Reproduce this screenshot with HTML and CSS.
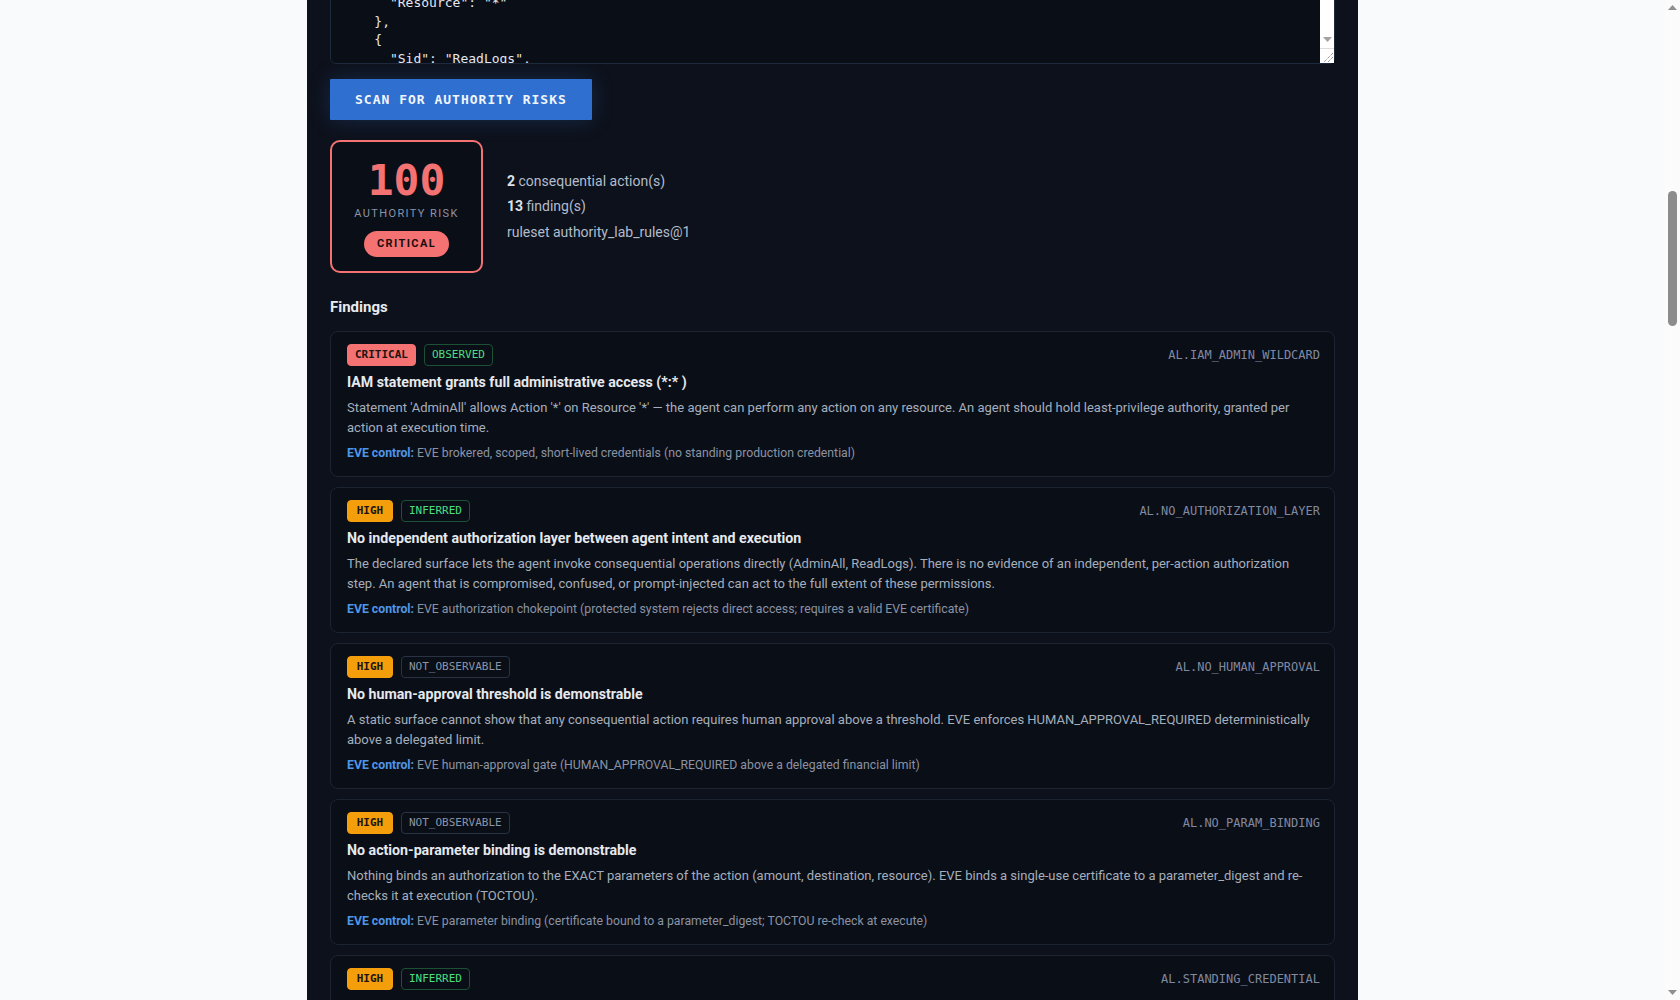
FILE: index.html
```html
<!DOCTYPE html>
<html lang="en">
<head>
<meta charset="utf-8">
<title>EVE Authority Lab</title>
<link rel="stylesheet" href="styles.css">
</head>
<body>
<main class="app">
  <header class="masthead">
    <div class="brand">EVE <span class="brand-sub">Authority Lab</span></div>
    <p class="tagline">Paste the authority surface an AI agent runs with and see what it could do on its own: which consequential actions it can reach, and which controls are missing between its intent and execution.</p>
  </header>

  <section class="intro">
    <h2 class="section-title">How the scan works</h2>
    <ol class="steps">
      <li class="step"><span class="step-num">1</span><div><h3>Parse the surface</h3><p>IAM policies, tool manifests and credential scopes are normalised into a list of actions the agent is able to invoke.</p></div></li>
      <li class="step"><span class="step-num">2</span><div><h3>Find consequential actions</h3><p>Actions that move money, change infrastructure, delete data or widen access are flagged as consequential.</p></div></li>
      <li class="step"><span class="step-num">3</span><div><h3>Apply the ruleset</h3><p>Each rule reports a severity and whether the problem is observed in the surface, inferred from it, or simply not observable statically.</p></div></li>
      <li class="step"><span class="step-num">4</span><div><h3>Map to EVE controls</h3><p>Every finding names the EVE control that closes it: brokered credentials, an authorization chokepoint, approval gates and parameter binding.</p></div></li>
    </ol>
    <p class="note">Nothing you paste leaves this page. The scan is deterministic: the same surface and ruleset always give the same score.</p>
  </section>

  <section class="lab">
    <h2 class="section-title">Scan an agent</h2>
    <p class="hint">Pick a sample or paste your own policy document.</p>
    <div class="samples">
      <button class="sample">AWS admin agent</button>
      <button class="sample">Payments agent</button>
      <button class="sample">Read-only analyst</button>
    </div>
    <label class="field-label" for="surface">Authority surface (IAM policy JSON)</label>
    <div class="surface-wrap">
      <textarea id="surface" class="surface" spellcheck="false">
{
  "Version": "2012-10-17",
  "Statement": [
    {
      "Sid": "AdminAll",
      "Effect": "Allow",
      "Action": "*",
      "Resource": "*"
    },
    {
      "Sid": "ReadLogs",
      "Effect": "Allow",
      "Action": [
        "logs:GetLogEvents",
        "logs:FilterLogEvents"
      ],
      "Resource": "*"
    }
  ]
}</textarea>
      <div class="ta-scrollbar" aria-hidden="true">
        <span class="ta-btn"><svg width="9" height="6" viewBox="0 0 9 6"><path d="M0 0h9L4.5 5z" fill="#a3a3a3"/></svg></span>
        <span class="ta-corner"><svg width="14" height="14" viewBox="0 0 14 14"><path d="M13 4 4 13M13 8 8 13" stroke="#6b6b6b" stroke-width="1" stroke-dasharray="1 1" fill="none"/></svg></span>
      </div>
    </div>
    <button class="scan-btn" id="scan">SCAN FOR AUTHORITY RISKS</button>

    <div class="summary">
      <div class="score-box">
        <div class="score">100</div>
        <div class="score-label">AUTHORITY RISK</div>
        <span class="band">CRITICAL</span>
      </div>
      <div class="stats">
        <div><b>2</b> consequential action(s)</div>
        <div><b>13</b> finding(s)</div>
        <div>ruleset authority_lab_rules@1</div>
      </div>
    </div>

    <h2 class="findings-title">Findings</h2>
    <div class="findings">
      <article class="finding">
        <div class="finding-head">
          <div class="badges"><span class="sev sev-critical">CRITICAL</span><span class="ev ev-yes">OBSERVED</span></div>
          <code class="rule">AL.IAM_ADMIN_WILDCARD</code>
        </div>
        <h3 class="finding-title">IAM statement grants full administrative access (*:* )</h3>
        <p class="desc">Statement 'AdminAll' allows Action '*' on Resource '*' — the agent can perform any action on any resource. An agent should hold least-privilege authority, granted per action at execution time.</p>
        <p class="control"><strong>EVE control:</strong> EVE brokered, scoped, short-lived credentials (no standing production credential)</p>
      </article>

      <article class="finding">
        <div class="finding-head">
          <div class="badges"><span class="sev sev-high">HIGH</span><span class="ev ev-yes">INFERRED</span></div>
          <code class="rule">AL.NO_AUTHORIZATION_LAYER</code>
        </div>
        <h3 class="finding-title">No independent authorization layer between agent intent and execution</h3>
        <p class="desc">The declared surface lets the agent invoke consequential operations directly (AdminAll, ReadLogs). There is no evidence of an independent, per-action authorization step. An agent that is compromised, confused, or prompt-injected can act to the full extent of these permissions.</p>
        <p class="control"><strong>EVE control:</strong> EVE authorization chokepoint (protected system rejects direct access; requires a valid EVE certificate)</p>
      </article>

      <article class="finding">
        <div class="finding-head">
          <div class="badges"><span class="sev sev-high">HIGH</span><span class="ev ev-no">NOT_OBSERVABLE</span></div>
          <code class="rule">AL.NO_HUMAN_APPROVAL</code>
        </div>
        <h3 class="finding-title">No human-approval threshold is demonstrable</h3>
        <p class="desc">A static surface cannot show that any consequential action requires human approval above a threshold. EVE enforces HUMAN_APPROVAL_REQUIRED deterministically above a delegated limit.</p>
        <p class="control"><strong>EVE control:</strong> EVE human-approval gate (HUMAN_APPROVAL_REQUIRED above a delegated financial limit)</p>
      </article>

      <article class="finding">
        <div class="finding-head">
          <div class="badges"><span class="sev sev-high">HIGH</span><span class="ev ev-no">NOT_OBSERVABLE</span></div>
          <code class="rule">AL.NO_PARAM_BINDING</code>
        </div>
        <h3 class="finding-title">No action-parameter binding is demonstrable</h3>
        <p class="desc">Nothing binds an authorization to the EXACT parameters of the action (amount, destination, resource). EVE binds a single-use certificate to a parameter_digest and re-checks it at execution (TOCTOU).</p>
        <p class="control"><strong>EVE control:</strong> EVE parameter binding (certificate bound to a parameter_digest; TOCTOU re-check at execute)</p>
      </article>

      <article class="finding">
        <div class="finding-head">
          <div class="badges"><span class="sev sev-high">HIGH</span><span class="ev ev-yes">INFERRED</span></div>
          <code class="rule">AL.STANDING_CREDENTIAL</code>
        </div>
        <h3 class="finding-title">Agent runs on a standing, long-lived credential</h3>
        <p class="desc">The policy is attached to an identity the agent holds continuously. A leaked or misused standing credential keeps its full authority until someone notices and revokes it by hand.</p>
        <p class="control"><strong>EVE control:</strong> EVE brokered, scoped, short-lived credentials (minted per action, expire on use)</p>
      </article>

      <article class="finding">
        <div class="finding-head">
          <div class="badges"><span class="sev sev-medium">MEDIUM</span><span class="ev ev-yes">OBSERVED</span></div>
          <code class="rule">AL.WILDCARD_RESOURCE</code>
        </div>
        <h3 class="finding-title">Statement applies to every resource (Resource '*')</h3>
        <p class="desc">Statement 'ReadLogs' allows its actions on Resource '*'. Reading every log group can expose secrets, tokens and customer data written to logs by other systems.</p>
        <p class="control"><strong>EVE control:</strong> EVE scoped credentials (resource set narrowed to the action being authorized)</p>
      </article>

      <article class="finding">
        <div class="finding-head">
          <div class="badges"><span class="sev sev-medium">MEDIUM</span><span class="ev ev-no">NOT_OBSERVABLE</span></div>
          <code class="rule">AL.NO_DECISION_RECORD</code>
        </div>
        <h3 class="finding-title">No tamper-evident decision record is demonstrable</h3>
        <p class="desc">A static surface cannot show that each consequential action leaves a signed record of who authorized it, with which parameters, and under which policy version.</p>
        <p class="control"><strong>EVE control:</strong> EVE decision ledger (signed, append-only record per certificate)</p>
      </article>

      <article class="finding">
        <div class="finding-head">
          <div class="badges"><span class="sev sev-medium">MEDIUM</span><span class="ev ev-no">NOT_OBSERVABLE</span></div>
          <code class="rule">AL.NO_REVOCATION</code>
        </div>
        <h3 class="finding-title">No per-action revocation path is demonstrable</h3>
        <p class="desc">Nothing shows that an authorization can be withdrawn between approval and execution. EVE certificates are single-use and can be revoked before they are redeemed.</p>
        <p class="control"><strong>EVE control:</strong> EVE certificate revocation (checked again at execute)</p>
      </article>

      <article class="finding">
        <div class="finding-head">
          <div class="badges"><span class="sev sev-medium">MEDIUM</span><span class="ev ev-yes">INFERRED</span></div>
          <code class="rule">AL.NO_SEPARATION_OF_DUTIES</code>
        </div>
        <h3 class="finding-title">The agent can both request and grant authority</h3>
        <p class="desc">With iam:* in scope the agent can attach new policies to itself. Requesting and granting authority should be held by different principals.</p>
        <p class="control"><strong>EVE control:</strong> EVE authorization chokepoint (policy changes require an out-of-band approver)</p>
      </article>

      <article class="finding">
        <div class="finding-head">
          <div class="badges"><span class="sev sev-low">LOW</span><span class="ev ev-no">NOT_OBSERVABLE</span></div>
          <code class="rule">AL.NO_RATE_LIMIT</code>
        </div>
        <h3 class="finding-title">No rate or volume limit is demonstrable</h3>
        <p class="desc">A static surface cannot show any cap on how many consequential actions the agent may take in a window of time.</p>
        <p class="control"><strong>EVE control:</strong> EVE delegation limits (per-window action and value budgets)</p>
      </article>

      <article class="finding">
        <div class="finding-head">
          <div class="badges"><span class="sev sev-low">LOW</span><span class="ev ev-yes">OBSERVED</span></div>
          <code class="rule">AL.NO_CONDITION_KEYS</code>
        </div>
        <h3 class="finding-title">No condition keys restrict when statements apply</h3>
        <p class="desc">Neither statement uses a Condition block (source network, MFA, time of day), so the grants apply in every context.</p>
        <p class="control"><strong>EVE control:</strong> EVE context binding (certificate carries the approved context)</p>
      </article>

      <article class="finding">
        <div class="finding-head">
          <div class="badges"><span class="sev sev-low">LOW</span><span class="ev ev-no">NOT_OBSERVABLE</span></div>
          <code class="rule">AL.NO_EXPIRY</code>
        </div>
        <h3 class="finding-title">No expiry is demonstrable for granted authority</h3>
        <p class="desc">The surface does not show when, if ever, this authority stops being valid.</p>
        <p class="control"><strong>EVE control:</strong> EVE short-lived credentials (minutes, not months)</p>
      </article>

      <article class="finding">
        <div class="finding-head">
          <div class="badges"><span class="sev sev-info">INFO</span><span class="ev ev-yes">OBSERVED</span></div>
          <code class="rule">AL.POLICY_VERSION</code>
        </div>
        <h3 class="finding-title">Policy language version 2012-10-17</h3>
        <p class="desc">The document uses the current IAM policy language version; policy variables are supported.</p>
        <p class="control"><strong>EVE control:</strong> none required</p>
      </article>
    </div>
  </section>

  <footer class="foot">EVE Authority Lab · ruleset authority_lab_rules@1 · static analysis only</footer>
</main>

<div class="page-scrollbar" aria-hidden="true">
  <span class="ps-arrow"><svg width="9" height="5" viewBox="0 0 9 5"><path d="M0 5h9L4.5 0z" fill="#8f8f8f"/></svg></span>
  <span class="ps-track"><span class="ps-thumb"></span></span>
  <span class="ps-arrow"><svg width="9" height="5" viewBox="0 0 9 5"><path d="M0 0h9L4.5 5z" fill="#8f8f8f"/></svg></span>
</div>
<script src="app.js"></script>
</body>
</html>
```

FILE: styles.css
```css
* { box-sizing: border-box; }

html, body {
  margin: 0;
  background: #f8fafc;
}

body {
  padding-right: 15px;
  font-family: Roboto, "Liberation Sans", sans-serif;
  color: #c3cad6;
}

.app {
  width: 1051px;
  margin: 0 auto;
  padding: 40px 23px 80px;
  background: #0d111b;
}

/* ---------- top of page ---------- */
.masthead { padding-bottom: 36px; border-bottom: 1px solid #1c2331; }
.brand { font: 700 28px/1.2 "DejaVu Sans Mono", monospace; color: #e8ecf2; letter-spacing: 1px; }
.brand-sub { color: #5b9be8; }
.tagline { margin: 14px 0 0; font-size: 15px; line-height: 24px; color: #a7b0bf; max-width: 760px; }

.intro { padding: 36px 0; border-bottom: 1px solid #1c2331; }
.section-title { margin: 0 0 18px; font-size: 18px; color: #e6e9ee; }
.steps { list-style: none; margin: 0; padding: 0; display: grid; grid-template-columns: 1fr 1fr; gap: 16px; }
.step { display: flex; gap: 14px; padding: 18px; border: 1px solid #1e2533; border-radius: 8px; background: #0a0e17; min-height: 128px; }
.step h3 { margin: 0 0 8px; font-size: 15px; color: #e5e7eb; }
.step p { margin: 0; font-size: 13px; line-height: 20px; color: #a3acb9; }
.step-num { flex: none; width: 28px; height: 28px; border-radius: 50%; background: #17223a; color: #5b9be8; font: 700 13px/28px "DejaVu Sans Mono", monospace; text-align: center; }
.note { margin: 20px 0 0; font-size: 13px; color: #8b93a3; }

.lab { padding-top: 36px; }
.hint { margin: -8px 0 16px; font-size: 14px; color: #a3acb9; }
.samples { display: flex; gap: 10px; margin-bottom: 22px; }
.sample { padding: 8px 14px; border: 1px solid #26324a; border-radius: 6px; background: #111827; color: #c3cad6; font: 13px Roboto, sans-serif; }
.field-label { display: block; margin-bottom: 8px; font-size: 13px; color: #8b93a3; }

/* ---------- policy textarea ---------- */
.surface-wrap { position: relative; }

.surface {
  display: block;
  width: 100%;
  height: 212px;
  padding: 12px;
  border: 1px solid #1d2a3e;
  border-radius: 6px;
  background: #0a0e17;
  color: #e4e8ef;
  font: 13px/18.5px "DejaVu Sans Mono", monospace;
}

/* classic light scrollbar drawn at the textarea's right edge */
.ta-scrollbar {
  position: absolute;
  top: 1px;
  right: 1px;
  bottom: 1px;
  width: 14px;
  display: flex;
  flex-direction: column;
  justify-content: flex-end;
  background: #ffffff;
}

.ta-btn {
  height: 15px;
  display: flex;
  align-items: center;
  justify-content: center;
}

.ta-corner {
  height: 15px;
  border-top: 1px solid #dcdcdc;
  display: flex;
  align-items: flex-end;
  justify-content: flex-end;
}

/* ---------- scan button ---------- */
.scan-btn {
  display: block;
  margin-top: 15px;
  padding: 12px 25px;
  border: 0;
  border-radius: 1px;
  background: #2f6fcf;
  color: #f1f5fb;
  font: 700 13px/17px "DejaVu Sans Mono", monospace;
  letter-spacing: 1px;
  box-shadow: 0 0 22px rgba(59, 130, 246, 0.22);
}

/* ---------- summary ---------- */
.summary {
  display: flex;
  align-items: center;
  gap: 24px;
  margin-top: 20px;
}

.score-box {
  width: 153px;
  height: 133px;
  padding-top: 17px;
  border: 2px solid #f47272;
  border-radius: 10px;
  background: #0a0e17;
  text-align: center;
}

.score {
  font: 700 43px/43px "DejaVu Sans Mono", monospace;
  color: #f47272;
}

.score-label {
  margin-top: 5px;
  font-size: 11px;
  line-height: 14px;
  letter-spacing: 1.4px;
  color: #8a94a8;
}

.band {
  display: inline-block;
  margin-top: 10px;
  padding: 0 13px;
  border-radius: 13px;
  background: #f47272;
  color: #1a0d0d;
  font-size: 11px;
  font-weight: 700;
  line-height: 26px;
  letter-spacing: 1.4px;
}

.stats {
  display: flex;
  flex-direction: column;
  gap: 5.5px;
  font-size: 14px;
  line-height: 20px;
  color: #b3bccb;
}

.stats b { color: #dde2ea; }

/* ---------- findings ---------- */
.findings-title {
  margin: 24px 0 14px;
  font-size: 15px;
  line-height: 20px;
  color: #e8eaee;
}

.findings {
  display: flex;
  flex-direction: column;
  gap: 10px;
}

.finding {
  padding: 12px 14px 14px 16px;
  border: 1px solid #1c2331;
  border-radius: 8px;
  background: #0a0e17;
}

.finding-head {
  display: flex;
  align-items: center;
  justify-content: space-between;
}

.badges { display: flex; gap: 8px; }

.sev, .ev {
  padding: 2px 7px;
  border: 1px solid transparent;
  border-radius: 4px;
  font: 11px/16px "DejaVu Sans Mono", monospace;
  text-align: center;
}

.sev { min-width: 46px; font-weight: 700; color: #1d1410; }
.sev-critical { background: #f47272; border-color: #f47272; }
.sev-high { background: #f59e0b; border-color: #f59e0b; }
.sev-medium { background: #eab308; border-color: #eab308; }
.sev-low { background: #60a5fa; border-color: #60a5fa; }
.sev-info { background: #94a3b8; border-color: #94a3b8; }

.ev-yes { border-color: #1d5135; color: #4ade80; }
.ev-no { border-color: #2a3344; color: #8b95a7; }

.rule {
  font: 12px/16px "DejaVu Sans Mono", monospace;
  color: #8089a0;
}

.finding-title {
  margin: 7px 0 0;
  font-size: 14.2px;
  line-height: 19px;
  font-weight: 700;
  color: #e6e9ee;
}

.desc {
  margin: 6px 0 0;
  font-size: 13px;
  line-height: 20px;
  color: #a5aebc;
}

.control {
  margin: 6px 0 0;
  font-size: 12.25px;
  line-height: 18px;
  color: #8a93a4;
}

.control strong { color: #4f96e6; }

.foot {
  margin-top: 40px;
  font-size: 12px;
  color: #6b7486;
}

/* ---------- window scrollbar (drawn over the right edge) ---------- */
.page-scrollbar {
  position: fixed;
  top: 0;
  right: 0;
  width: 15px;
  height: 100vh;
  display: flex;
  flex-direction: column;
  background: #fbfbfb;
}

.ps-arrow {
  height: 15px;
  flex: none;
  display: flex;
  align-items: center;
  justify-content: center;
}

.ps-track {
  flex: 1;
  padding-top: 176px;
}

.ps-thumb {
  display: block;
  width: 9px;
  height: 135px;
  margin: 0 auto;
  border-radius: 5px;
  background: #8c8c8c;
}
```

FILE: app.js
```js
(function () {
  if ('scrollRestoration' in history) history.scrollRestoration = 'manual';
  function place() {
    var btn = document.getElementById('scan');
    var y = btn.getBoundingClientRect().top + window.scrollY - 79;
    window.scrollTo(0, y);
  }
  place();
  window.addEventListener('load', place);
})();
```
